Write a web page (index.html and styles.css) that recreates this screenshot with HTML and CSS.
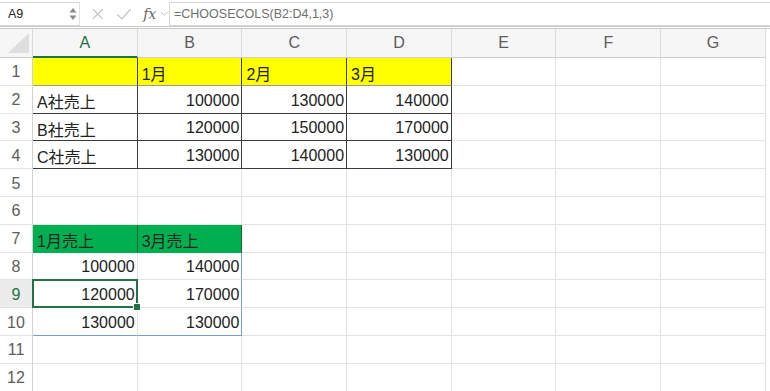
FILE: index.html
```html
<!DOCTYPE html>
<html>
<head>
    <title>CHOOSECOLS</title>
    <link rel="stylesheet" href="styles.css">
</head>
<body>
    <div class="toolbar">
        <div class="namebox">A9</div>
        <div class="spin">
            <svg width="8" height="16" viewBox="0 0 8 16"><path d="M4 2 L7.5 6.5 L0.5 6.5 Z M4 14 L7.5 9.5 L0.5 9.5 Z" fill="#8a8a8a"/></svg>
        </div>
        <div class="tools">
            <svg width="14" height="14" viewBox="0 0 14 14"><path d="M2 2 L12 12 M12 2 L2 12" stroke="#c4c4c4" stroke-width="1.4"/></svg>
            <svg width="16" height="14" viewBox="0 0 16 14"><path d="M1.5 7.5 L6 12 L15 2" stroke="#c4c4c4" stroke-width="1.4" fill="none"/></svg>
            <span class="fx">fx</span>
            <svg width="9" height="8" viewBox="0 0 9 8"><path d="M1 2 L4.5 5.5 L8 2" stroke="#c4c4c4" stroke-width="1" fill="none"/></svg>
        </div>
        <div class="formula">=CHOOSECOLS(B2:D4,1,3)</div>
    </div>

    <div class="sheet">
        <div class="hd corner"><svg width="26" height="24" viewBox="0 0 26 24"><path d="M24 2 L24 22 L3 22 Z" fill="#dedede"/></svg></div>
        <div class="hd col active">A</div>
        <div class="hd col">B</div>
        <div class="hd col">C</div>
        <div class="hd col">D</div>
        <div class="hd col">E</div>
        <div class="hd col">F</div>
        <div class="hd col">G</div>

        <div class="rh">1</div>
        <div class="c yel t tl"></div>
        <div class="c yel t">1月</div>
        <div class="c yel t">2月</div>
        <div class="c yel t">3月</div>
        <div class="c"></div><div class="c"></div><div class="c"></div>

        <div class="rh">2</div>
        <div class="c t">A社売上</div>
        <div class="c t n">100000</div>
        <div class="c t n">130000</div>
        <div class="c t n">140000</div>
        <div class="c"></div><div class="c"></div><div class="c"></div>

        <div class="rh">3</div>
        <div class="c t">B社売上</div>
        <div class="c t n">120000</div>
        <div class="c t n">150000</div>
        <div class="c t n">170000</div>
        <div class="c"></div><div class="c"></div><div class="c"></div>

        <div class="rh">4</div>
        <div class="c t">C社売上</div>
        <div class="c t n">130000</div>
        <div class="c t n">140000</div>
        <div class="c t n">130000</div>
        <div class="c"></div><div class="c"></div><div class="c"></div>

        <div class="rh">5</div>
        <div class="c"></div><div class="c"></div><div class="c"></div><div class="c"></div>
        <div class="c"></div><div class="c"></div><div class="c"></div>

        <div class="rh">6</div>
        <div class="c"></div><div class="c"></div><div class="c"></div><div class="c"></div>
        <div class="c"></div><div class="c"></div><div class="c"></div>

        <div class="rh">7</div>
        <div class="c grn">1月売上</div>
        <div class="c grn">3月売上</div>
        <div class="c"></div><div class="c"></div><div class="c"></div><div class="c"></div><div class="c"></div>

        <div class="rh">8</div>
        <div class="c n">100000</div>
        <div class="c n spill-r">140000</div>
        <div class="c"></div><div class="c"></div><div class="c"></div><div class="c"></div><div class="c"></div>

        <div class="rh sel-row">9</div>
        <div class="c n sel">120000</div>
        <div class="c n spill-r">170000</div>
        <div class="c"></div><div class="c"></div><div class="c"></div><div class="c"></div><div class="c"></div>

        <div class="rh">10</div>
        <div class="c n spill-b">130000</div>
        <div class="c n spill-r spill-b">130000</div>
        <div class="c"></div><div class="c"></div><div class="c"></div><div class="c"></div><div class="c"></div>

        <div class="rh">11</div>
        <div class="c"></div><div class="c"></div><div class="c"></div><div class="c"></div>
        <div class="c"></div><div class="c"></div><div class="c"></div>

        <div class="rh">12</div>
        <div class="c"></div><div class="c"></div><div class="c"></div><div class="c"></div>
        <div class="c"></div><div class="c"></div><div class="c"></div>
    </div>
</body>
</html>
```

FILE: styles.css
```css
* {
    box-sizing: border-box;
}
body {
    margin: 0;
    background: #fff;
    font-family: "Liberation Sans", "Noto Sans CJK JP", sans-serif;
    overflow: hidden;
}
.toolbar {
    display: flex;
    align-items: center;
    height: 29px;
    padding-top: 1px;
    border-bottom: 3px double #c9c9c9;
    background: #fff;
}
.namebox {
    width: 66px;
    height: 24px;
    padding: 4px 0 0 8px;
    font-size: 12.5px;
    color: #222;
    border-top: 1px solid #d6d6d6;
    border-bottom: 1px solid #d6d6d6;
}
.spin {
    display: flex;
    align-items: center;
    width: 14px;
    height: 24px;
    padding-left: 3px;
    border-top: 1px solid #d6d6d6;
    border-bottom: 1px solid #d6d6d6;
    border-right: 1px solid #e2e2e2;
}
.tools {
    display: flex;
    align-items: center;
    gap: 11px;
    padding-left: 11px;
    width: 89px;
    height: 24px;
}
.fx {
    font-family: "DejaVu Serif", "Liberation Serif", serif;
    font-style: italic;
    font-size: 14px;
    color: #666;
    margin-left: 1px;
    margin-right: -7px;
}
.formula {
    flex: 1;
    height: 24px;
    padding: 4px 0 0 4px;
    font-size: 12.5px;
    color: #6f6f6f;
    border: 1px solid #d6d6d6;
    border-right: none;
}
.sheet {
    display: grid;
    grid-template-columns: 33px repeat(7, 104.7px);
    grid-template-rows: 29px repeat(12, 27.8px);
}
.hd {
    display: flex;
    align-items: center;
    justify-content: center;
    background: #f6f6f6;
    border-right: 1px solid #dcdcdc;
    border-bottom: 1px solid #cfcfcf;
    font-size: 16px;
    color: #5c5c5c;
}
.corner {
    justify-content: flex-end;
    padding-right: 1px;
}
.col.active {
    color: #217346;
    border-bottom: 2px solid #217346;
}
.rh {
    display: flex;
    align-items: center;
    justify-content: center;
    border-right: 1px solid #d2d2d2;
    border-bottom: 1px solid #e4e4e4;
    font-size: 16px;
    color: #5c5c5c;
    padding-top: 2px;
}
.sel-row {
    background: #ececec;
    color: #217346;
}
.c {
    display: flex;
    align-items: center;
    padding: 3px 4px 0 4px;
    border-right: 1px solid #e2e2e2;
    border-bottom: 1px solid #e2e2e2;
    font-size: 16px;
    color: #222;
    white-space: nowrap;
}
.n {
    justify-content: flex-end;
    padding-right: 2px;
}
.t {
    border-right-color: #3a3a3a;
    border-bottom-color: #3a3a3a;
}
.yel {
    background: #ffff00;
    border-bottom-color: #9a9a9a;
}
.grn {
    background: #00b050;
    border-right-color: #1d5f35;
    border-bottom-color: #00b050;
}
.spill-r {
    border-right-color: #7b9ad8;
}
.spill-b {
    border-bottom-color: #7b9ad8;
}
.sel {
    position: relative;
}
.sel::after {
    content: "";
    position: absolute;
    left: -1px;
    top: -1px;
    right: -1px;
    bottom: -1px;
    border: 2px solid #217346;
}
.sel::before {
    content: "";
    position: absolute;
    right: -4px;
    bottom: -4px;
    width: 6px;
    height: 6px;
    background: #217346;
    border: 1px solid #fff;
    z-index: 1;
}
```
